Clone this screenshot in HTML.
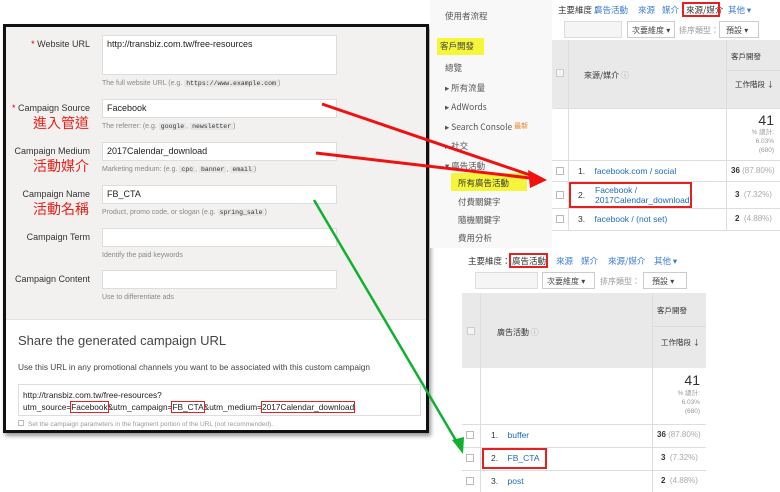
<!DOCTYPE html>
<html><head><meta charset="utf-8"><style>
*{margin:0;padding:0;box-sizing:border-box}
body{width:780px;height:492px;background:#fff;position:relative;overflow:hidden;font-family:"Liberation Sans","Noto Sans CJK TC",sans-serif;color:#333}
.a{position:absolute;white-space:nowrap}
.panel{position:absolute;left:3px;top:24px;width:426px;height:409px;border:3px solid #111;background:#fff;box-shadow:2px 3px 4px rgba(0,0,0,.4)}
.top{position:absolute;left:0;top:0;width:420px;height:293px;background:#f2f1f0;border-bottom:1px solid #e2e2e2}
.lab{position:absolute;right:336px;font-size:9px;color:#333;text-align:right}
.lab b{color:#d00;font-weight:normal}
.inp{position:absolute;left:96px;width:235px;height:19px;background:#fff;border:1px solid #ddd;font-size:9px;padding:3px 4px;color:#222}
.hint{position:absolute;left:96px;font-size:7px;color:#888}
.hint code{font-family:"Liberation Mono",monospace;background:#e6e6e6;color:#333;padding:0 2px;font-size:6.5px}
.zh{position:absolute;right:337px;color:#e8201a;font-size:14px;font-family:"Noto Sans CJK TC",sans-serif}
.side{position:absolute;left:430px;top:0;width:122px;height:248px;background:#f8f8f8}
.si{position:absolute;font-size:8.5px;color:#555;font-family:"Noto Sans CJK TC","Liberation Sans",sans-serif}
.tab{font-size:8.5px;color:#3a7bd5;font-family:"Noto Sans CJK TC","Liberation Sans",sans-serif;position:absolute}
.box{position:absolute;border:2px solid #e52020}
.rb{outline:1.5px solid #e52020;outline-offset:0}
.g{color:#aaa}
.lnk{color:#1f6cb5}
</style></head><body>

<div class="panel">
 <div class="top">
  <div class="lab" style="top:12px"><b>*</b> Website URL</div>
  <div class="inp" style="top:8px;height:40px">http://transbiz.com.tw/free-resources</div>
  <div class="hint" style="top:53px">The full website URL (e.g. <code>https://www.example.com</code>)</div>

  <div class="lab" style="top:76px"><b>*</b> Campaign Source</div>
  <div class="zh" style="top:86px">進入管道</div>
  <div class="inp" style="top:72px">Facebook</div>
  <div class="hint" style="top:96px">The referrer: (e.g. <code>google</code>, <code>newsletter</code>)</div>

  <div class="lab" style="top:119px">Campaign Medium</div>
  <div class="zh" style="top:129px">活動媒介</div>
  <div class="inp" style="top:115px">2017Calendar_download</div>
  <div class="hint" style="top:139px">Marketing medium: (e.g. <code>cpc</code>, <code>banner</code>, <code>email</code>)</div>

  <div class="lab" style="top:162px">Campaign Name</div>
  <div class="zh" style="top:172px">活動名稱</div>
  <div class="inp" style="top:158px">FB_CTA</div>
  <div class="hint" style="top:182px">Product, promo code, or slogan (e.g. <code>spring_sale</code>)</div>

  <div class="lab" style="top:205px">Campaign Term</div>
  <div class="inp" style="top:201px"></div>
  <div class="hint" style="top:225px">Identify the paid keywords</div>

  <div class="lab" style="top:247px">Campaign Content</div>
  <div class="inp" style="top:243px"></div>
  <div class="hint" style="top:267px">Use to differentiate ads</div>
 </div>
 <div class="a" style="left:12px;top:306px;font-size:13px;color:#444">Share the generated campaign URL</div>
 <div class="a" style="left:12px;top:335px;font-size:8.3px;color:#444">Use this URL in any promotional channels you want to be associated with this custom campaign</div>
 <div class="a" style="left:12px;top:357px;width:403px;height:32px;border:1px solid #ddd;font-size:8.3px;color:#222;padding:4px 4px;line-height:12px;white-space:normal">http://transbiz.com.tw/free-resources?<br>utm_source=<span class="rb">Facebook</span>&amp;utm_campaign=<span class="rb">FB_CTA</span>&amp;utm_medium=<span class="rb">2017Calendar_download</span></div>
 <div class="a" style="left:12px;top:393px;font-size:6.5px;color:#999"><span style="display:inline-block;width:6px;height:6px;border:1px solid #bbb;margin-right:4px"></span>Set the campaign parameters in the fragment portion of the URL (not recommended).</div>
</div>

<div class="side">
 <div class="si" style="left:15px;top:10px">使用者流程</div>
 <div class="a" style="left:7px;top:38px;width:47px;height:17px;background:#f5f53a"></div>
 <div class="si" style="left:10px;top:40px;color:#444">客戶開發</div>
 <div class="si" style="left:15px;top:62px">總覽</div>
 <div class="si" style="left:15px;top:82px">▸ 所有流量</div>
 <div class="si" style="left:15px;top:101px">▸ AdWords</div>
 <div class="si" style="left:15px;top:121px">▸ Search Console <span style="color:#f08020;font-size:7px;vertical-align:top">最新</span></div>
 <div class="si" style="left:15px;top:140px">▸ 社交</div>
 <div class="si" style="left:15px;top:160px">▾ 廣告活動</div>
 <div class="a" style="left:21px;top:173px;width:76px;height:18px;background:#f5f53a"></div>
 <div class="si" style="left:28px;top:177px;color:#333">所有廣告活動</div>
 <div class="si" style="left:28px;top:196px">付費關鍵字</div>
 <div class="si" style="left:28px;top:214px">隨機關鍵字</div>
 <div class="si" style="left:28px;top:232px">費用分析</div>
</div>

<div class="tab" style="left:558px;top:4px;color:#333">主要維度：</div>
<div class="tab" style="left:594px;top:4px">廣告活動</div>
<div class="tab" style="left:638px;top:4px">來源</div>
<div class="tab" style="left:662px;top:4px">媒介</div>
<div class="tab" style="left:686px;top:4px;color:#333">來源/媒介</div>
<div class="box" style="left:682px;top:2px;width:38px;height:15px"></div>
<div class="tab" style="left:728px;top:4px">其他 ▾</div>
<div class="a" style="left:564px;top:21px;width:58px;height:17px;border:1px solid #ddd;background:#f5f5f5"></div>
<div class="a" style="left:627px;top:21px;width:48px;height:17px;border:1px solid #ccc;font-size:8px;padding:3px 4px;color:#444">次要維度 ▾</div>
<div class="a" style="left:679px;top:25px;font-size:8px;color:#999">排序類型：</div>
<div class="a" style="left:719px;top:21px;width:40px;height:17px;border:1px solid #ccc;font-size:8px;padding:3px 6px;color:#444">預設 ▾</div>
<div class="a" style="left:552px;top:40px;width:228px;height:69px;background:#e9e9e9"></div>
<div class="a" style="left:568px;top:40px;width:1px;height:190px;background:#ddd"></div>
<div class="a" style="left:726px;top:40px;width:1px;height:190px;background:#ddd"></div>
<div class="a" style="left:727px;top:70px;width:53px;height:1px;background:#ddd"></div>
<div class="a" style="left:556px;top:69px;width:8px;height:8px;border:1px solid #ccc;background:#f4f4f4"></div>
<div class="a" style="left:584px;top:70px;font-size:8px;color:#333;font-family:'Noto Sans CJK TC',sans-serif">來源/媒介 <span class="g">ⓘ</span></div>
<div class="a" style="left:731px;top:51px;font-size:7.5px;color:#333;font-family:'Noto Sans CJK TC',sans-serif">客戶開發</div>
<div class="a" style="left:735px;top:79px;font-size:7.5px;color:#333;font-family:'Noto Sans CJK TC',sans-serif">工作階段 ↓</div>
<div class="a" style="left:556px;top:108px;width:224px;height:1px;background:#ddd"></div>
<div class="a" style="left:742px;top:112px;font-size:14px;color:#333;text-align:right;width:32px">41</div>
<div class="a" style="left:730px;top:128px;font-size:6.5px;color:#999;text-align:right;width:44px;line-height:9px;white-space:normal">% 總計:<br>6.03%<br>(680)</div>
<div class="a" style="left:552px;top:160px;width:228px;height:1px;background:#ddd"></div>
<div class="a" style="left:552px;top:181px;width:228px;height:1px;background:#ddd"></div>
<div class="a" style="left:552px;top:208px;width:228px;height:1px;background:#ddd"></div>
<div class="a" style="left:552px;top:230px;width:228px;height:1px;background:#ddd"></div>
<div class="a" style="left:556px;top:167px;width:8px;height:8px;border:1px solid #bbb"></div>
<div class="a" style="left:556px;top:191px;width:8px;height:8px;border:1px solid #bbb"></div>
<div class="a" style="left:556px;top:215px;width:8px;height:8px;border:1px solid #bbb"></div>
<div class="a" style="left:578px;top:166px;font-size:8.5px">1.&nbsp;&nbsp;&nbsp; <span class="lnk">facebook.com / social</span></div>
<div class="a" style="left:578px;top:190px;font-size:8.5px">2.</div>
<div class="a lnk" style="left:595px;top:185px;font-size:8.5px;line-height:10px">Facebook /<br>2017Calendar_download</div>
<div class="box" style="left:569px;top:182px;width:123px;height:26px"></div>
<div class="a" style="left:578px;top:214px;font-size:8.5px">3.&nbsp;&nbsp;&nbsp; <span class="lnk">facebook / (not set)</span></div>
<div class="a" style="left:731px;top:166px;font-size:8px"><b>36</b> <span class="g">(87.80%)</span></div>
<div class="a" style="left:735px;top:190px;font-size:8px"><b>3</b> &nbsp;<span class="g">(7.32%)</span></div>
<div class="a" style="left:735px;top:214px;font-size:8px"><b>2</b> &nbsp;<span class="g">(4.88%)</span></div>

<div class="tab" style="left:468px;top:255px;color:#333">主要維度：</div>
<div class="tab" style="left:512px;top:255px;color:#333">廣告活動</div>
<div class="box" style="left:509px;top:253px;width:39px;height:15px"></div>
<div class="tab" style="left:556px;top:255px">來源</div>
<div class="tab" style="left:581px;top:255px">媒介</div>
<div class="tab" style="left:608px;top:255px">來源/媒介</div>
<div class="tab" style="left:654px;top:255px">其他 ▾</div>
<div class="a" style="left:475px;top:272px;width:63px;height:17px;border:1px solid #ddd;background:#f5f5f5"></div>
<div class="a" style="left:542px;top:272px;width:53px;height:17px;border:1px solid #ccc;font-size:8px;padding:3px 4px;color:#444">次要維度 ▾</div>
<div class="a" style="left:600px;top:276px;font-size:8px;color:#999">排序類型：</div>
<div class="a" style="left:643px;top:272px;width:44px;height:17px;border:1px solid #ccc;font-size:8px;padding:3px 8px;color:#444">預設 ▾</div>
<div class="a" style="left:462px;top:293px;width:244px;height:75px;background:#e9e9e9"></div>
<div class="a" style="left:480px;top:293px;width:1px;height:199px;background:#ddd"></div>
<div class="a" style="left:652px;top:293px;width:1px;height:199px;background:#ddd"></div>
<div class="a" style="left:653px;top:326px;width:53px;height:1px;background:#ddd"></div>
<div class="a" style="left:467px;top:327px;width:8px;height:8px;border:1px solid #ccc;background:#f4f4f4"></div>
<div class="a" style="left:497px;top:327px;font-size:8px;color:#333;font-family:'Noto Sans CJK TC',sans-serif">廣告活動 <span class="g">ⓘ</span></div>
<div class="a" style="left:657px;top:305px;font-size:7.5px;color:#333;font-family:'Noto Sans CJK TC',sans-serif">客戶開發</div>
<div class="a" style="left:661px;top:337px;font-size:7.5px;color:#333;font-family:'Noto Sans CJK TC',sans-serif">工作階段 ↓</div>
<div class="a" style="left:668px;top:372px;font-size:14px;color:#333;text-align:right;width:32px">41</div>
<div class="a" style="left:656px;top:389px;font-size:6.5px;color:#999;text-align:right;width:44px;line-height:9px;white-space:normal">% 總計:<br>6.03%<br>(680)</div>
<div class="a" style="left:462px;top:424px;width:244px;height:1px;background:#ddd"></div>
<div class="a" style="left:462px;top:447px;width:244px;height:1px;background:#ddd"></div>
<div class="a" style="left:462px;top:470px;width:244px;height:1px;background:#ddd"></div>
<div class="a" style="left:466px;top:431px;width:8px;height:8px;border:1px solid #bbb"></div>
<div class="a" style="left:466px;top:454px;width:8px;height:8px;border:1px solid #bbb"></div>
<div class="a" style="left:466px;top:477px;width:8px;height:8px;border:1px solid #bbb"></div>
<div class="a" style="left:491px;top:430px;font-size:8.5px">1.&nbsp;&nbsp;&nbsp; <span class="lnk">buffer</span></div>
<div class="a" style="left:491px;top:453px;font-size:8.5px">2.&nbsp;&nbsp;&nbsp; <span class="lnk">FB_CTA</span></div>
<div class="box" style="left:482px;top:448px;width:65px;height:21px"></div>
<div class="a" style="left:491px;top:476px;font-size:8.5px">3.&nbsp;&nbsp;&nbsp; <span class="lnk">post</span></div>
<div class="a" style="left:657px;top:430px;font-size:8px"><b>36</b> <span class="g">(87.80%)</span></div>
<div class="a" style="left:661px;top:453px;font-size:8px"><b>3</b> &nbsp;<span class="g">(7.32%)</span></div>
<div class="a" style="left:661px;top:476px;font-size:8px"><b>2</b> &nbsp;<span class="g">(4.88%)</span></div>

<svg class="a" style="left:0;top:0" width="780" height="492">
 <line x1="322" y1="104" x2="533" y2="176" stroke="#f01010" stroke-width="3"/>
 <line x1="316" y1="153" x2="530" y2="178" stroke="#f01010" stroke-width="3"/>
 <polygon points="547,180 528,170 530,188" fill="#f01010"/>
 <line x1="314" y1="200" x2="458" y2="444" stroke="#10b030" stroke-width="2.5"/>
 <polygon points="463,454 452,440 464,437" fill="#10b030"/>
</svg>
</body></html>
